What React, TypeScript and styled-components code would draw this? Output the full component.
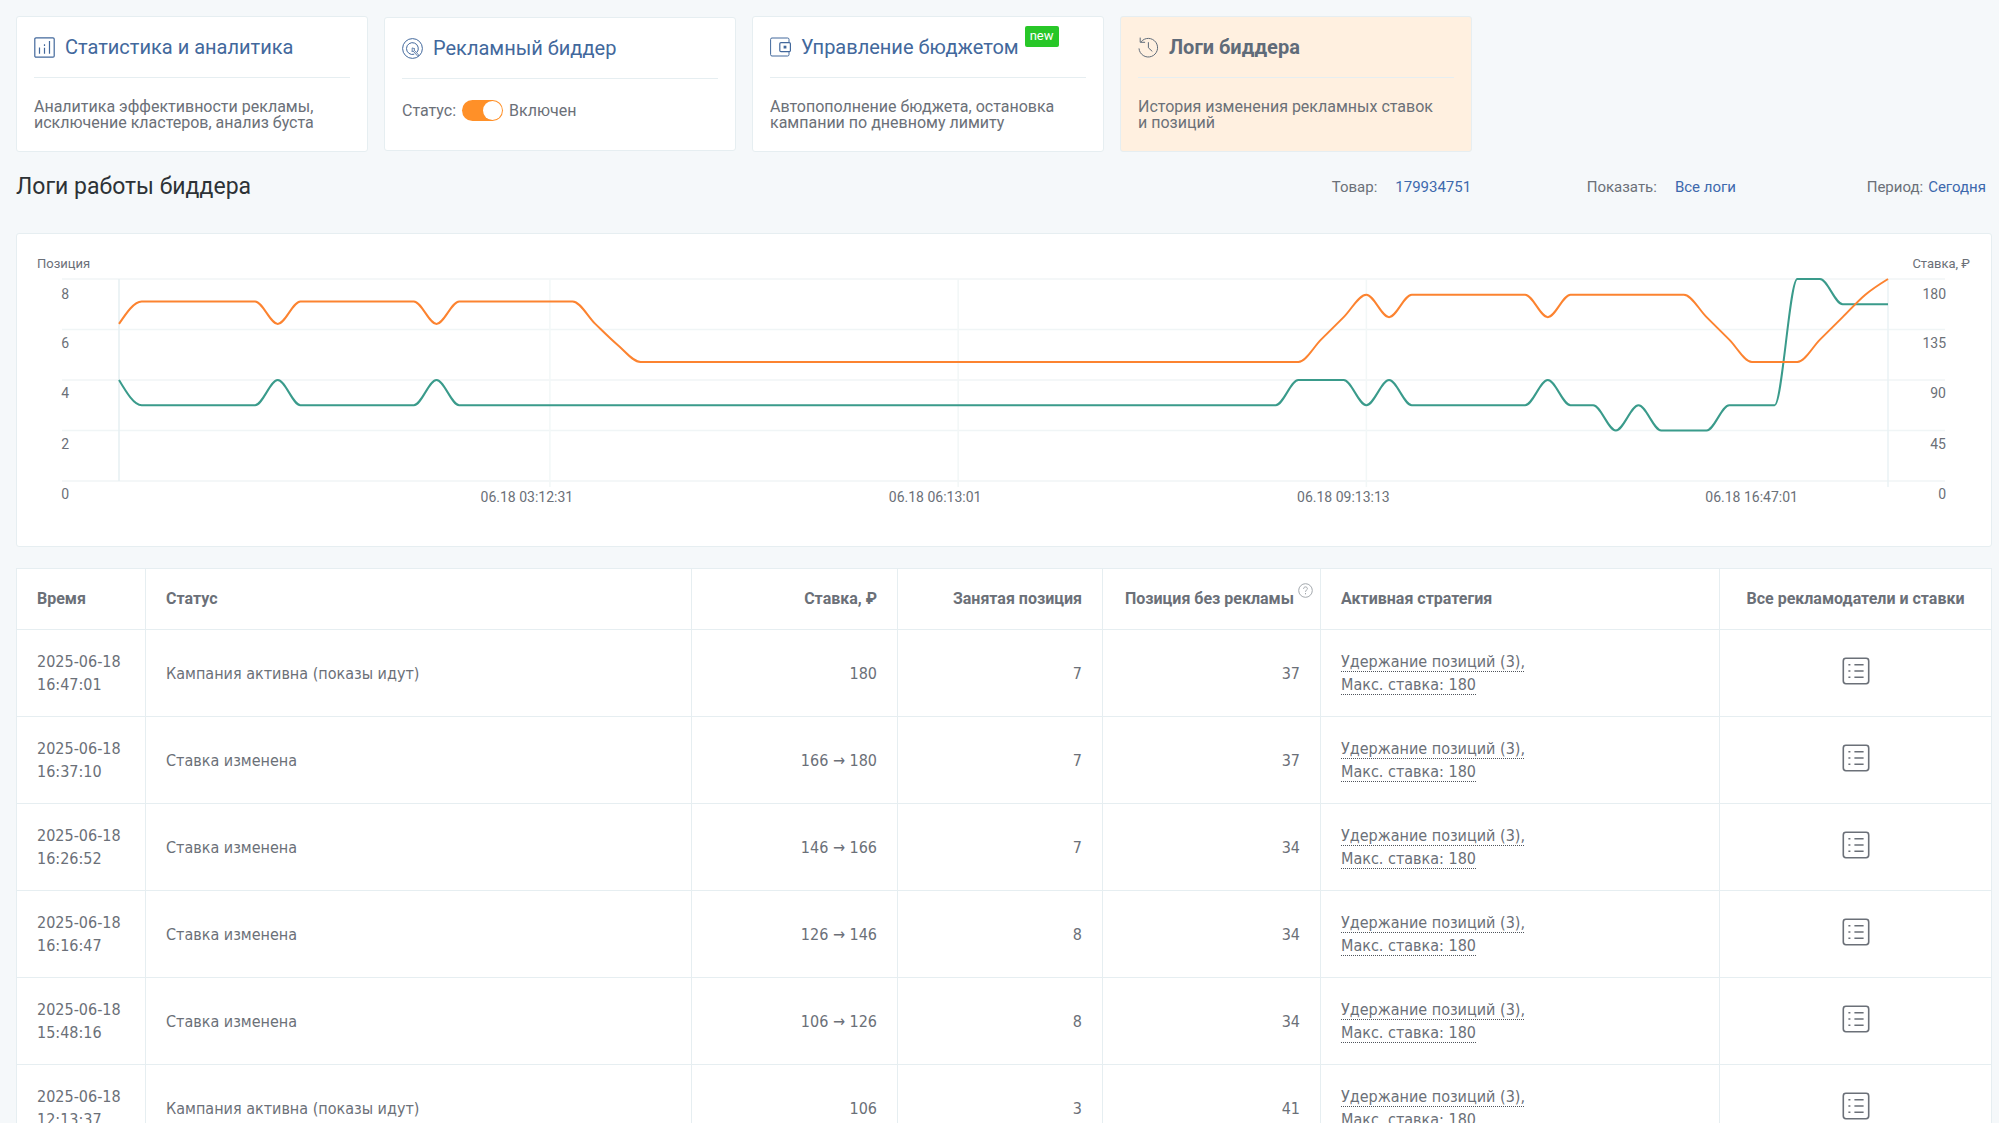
import React, { useLayoutEffect, useRef, useState } from "react";
import styled, { createGlobalStyle, css } from "styled-components";

const color = {
  page: "#f5f8fa",
  panel: "#ffffff",
  border: "#e6eef1",
  text: "#6b7078",
  heading: "#2d3236",
  link: "#3d69ad",
  title: "#42689c",
  active: "#fff0e0",
  activeTitle: "#5f6b79",
  orange: "#ff9028",
  bidLine: "#fc8330",
  green: "#3a9b8b",
  badge: "#28c728",
};

const GlobalStyle = createGlobalStyle`
  * { box-sizing: border-box; }
  body {
    margin: 0;
    background: ${color.page};
    color: ${color.text};
    font-family: Roboto, "Liberation Sans", sans-serif;
    font-size: 16px;
  }
  button {
    margin: 0;
    padding: 0;
    border: 0;
    background: none;
    color: inherit;
    font: inherit;
    cursor: pointer;
  }
`;

const Page = styled.main`
  padding: 16px 7px 0 16px;
`;

/* ---------- section cards ---------- */

const Cards = styled.nav`
  display: flex;
  align-items: center;
  gap: 16px;
`;

const Card = styled.section<{ $active?: boolean }>`
  flex: 0 1 352px;
  padding: 17px 17px 20px;
  border: 1px solid ${color.border};
  border-radius: 3px;
  background: ${(p) => (p.$active ? color.active : color.panel)};
`;

const CardHead = styled.div`
  display: flex;
  align-items: center;
  gap: 10px;
  padding-bottom: 17px;
  border-bottom: 1px solid ${color.border};
`;

const CardTitle = styled.a<{ $active?: boolean }>`
  display: flex;
  align-items: center;
  gap: 10px;
  color: ${color.title};
  font-size: 20px;
  line-height: 26px;
  text-decoration: none;
  white-space: nowrap;
  ${(p) =>
    p.$active &&
    css`
      color: ${color.activeTitle};
      font-weight: 700;
    `}
`;

const CardIcon = styled.svg`
  flex: none;
  width: 21px;
  height: 21px;
  fill: none;
  stroke: currentColor;
  stroke-width: 1;
`;

const Badge = styled.span`
  align-self: flex-start;
  height: 21px;
  margin: -8px 0 0 -4px;
  padding: 0 5px;
  border-radius: 2px;
  background: ${color.badge};
  color: #ffffff;
  font-size: 13px;
  line-height: 20px;
`;

const CardText = styled.p`
  margin: 21px 0 0;
  line-height: 16px;
`;

const StatusRow = styled.div`
  display: flex;
  align-items: flex-start;
  gap: 6px;
  min-height: 30px;
  margin-top: 21px;
  line-height: 21px;
`;

const Toggle = styled.input`
  appearance: none;
  display: flex;
  justify-content: flex-end;
  width: 41px;
  height: 21px;
  margin: 0;
  padding: 1px;
  border-radius: 11px;
  background: #c5cdd3;
  cursor: pointer;
  &::before {
    content: "";
    width: 19px;
    height: 19px;
    border-radius: 50%;
    background: #ffffff;
  }
  &:not(:checked) {
    justify-content: flex-start;
  }
  &:checked {
    background: ${color.orange};
  }
`;

/* ---------- heading and filters ---------- */

const Toolbar = styled.header`
  display: flex;
  justify-content: space-between;
  align-items: center;
  margin: 20px 0 31px;
`;

const Heading = styled.h1`
  margin: 0;
  color: ${color.heading};
  font-size: 23px;
  font-weight: 400;
  line-height: 30px;
`;

const Filters = styled.div`
  display: grid;
  grid-template-columns: 255px 280px auto;
  padding-right: 6px;
  font-size: 15px;
  line-height: 20px;
`;

const Filter = styled.div<{ $gap: number }>`
  display: flex;
  gap: ${(p) => p.$gap}px;
`;

const FilterValue = styled.button`
  color: ${color.link};
`;

/* ---------- chart ---------- */

const ChartPanel = styled.section`
  margin-bottom: 21px;
  border: 1px solid ${color.border};
  border-radius: 3px;
  background: ${color.panel};
`;

const ChartSvg = styled.svg`
  display: block;
  width: 100%;
  height: 312px;
  font-size: 14px;
  text {
    fill: ${color.text};
  }
`;

const AxisTitle = styled.text`
  font-size: 13px;
`;

const CHART = { left: 102, right: 103, top: 45, bottom: 247, steps: 78 };

type Run = [value: number, count: number];
const expand = (runs: Run[]) => runs.flatMap(([v, n]) => Array<number>(n).fill(v));

const positions = expand([
  [4, 1], [3, 6], [4, 1], [3, 6], [4, 1], [3, 37], [4, 3], [3, 1], [4, 1], [3, 6],
  [4, 1], [3, 2], [2, 1], [3, 1], [2, 3], [3, 3], [8, 2], [7, 3],
]);

const bids = expand([
  [140, 1], [160, 6], [140, 1], [160, 6], [140, 1], [160, 6], [140, 1], [121, 1],
  [106, 30], [126, 1], [146, 1], [166, 1], [146, 1], [166, 6], [146, 1], [166, 6],
  [146, 1], [126, 1], [106, 3], [126, 1], [146, 1], [166, 1], [180, 1],
]);

/* Monotone cubic path through evenly spaced values. */
function smoothPath(ys: number[], x0: number, dx: number) {
  const slope = ys.slice(1).map((y, i) => (y - ys[i]) / dx);
  const last = ys.length - 1;
  const t = ys.map((_, i) => {
    if (i === 0 || i === last) return 0;
    const a = slope[i - 1];
    const b = slope[i];
    if (a * b <= 0) return 0;
    return Math.sign(a) * Math.min(Math.abs(a), Math.abs(b), Math.abs(a + b) / 4) * 2;
  });
  t[0] = (3 * slope[0] - t[1]) / 2;
  t[last] = (3 * slope[last - 1] - t[last - 1]) / 2;
  let d = `M${x0},${ys[0]}`;
  for (let i = 0; i < last; i++) {
    const x = x0 + i * dx;
    const h = dx / 3;
    d += `C${x + h},${ys[i] + t[i] * h} ${x + 2 * h},${ys[i + 1] - t[i + 1] * h} ${x + dx},${ys[i + 1]}`;
  }
  return d;
}

function Chart() {
  const ref = useRef<SVGSVGElement>(null);
  const [width, setWidth] = useState(1200);

  useLayoutEffect(() => {
    const measure = () => {
      if (ref.current) setWidth(ref.current.getBoundingClientRect().width);
    };
    measure();
    window.addEventListener("resize", measure);
    return () => window.removeEventListener("resize", measure);
  }, []);

  const { left, right, top, bottom, steps } = CHART;
  const dx = (width - left - right) / steps;
  const y = (share: number) => bottom - share * (bottom - top);
  const ticks = [
    { share: 1, position: 8, bid: 180 },
    { share: 0.75, position: 6, bid: 135 },
    { share: 0.5, position: 4, bid: 90 },
    { share: 0.25, position: 2, bid: 45 },
    { share: 0, position: 0, bid: 0 },
  ];
  const times = [
    { step: 19, label: "06.18 03:12:31" },
    { step: 37, label: "06.18 06:13:01" },
    { step: 55, label: "06.18 09:13:13" },
    { step: 73, label: "06.18 16:47:01" },
  ];

  return (
    <ChartSvg ref={ref} role="img" aria-label="Позиция и ставка">
      <AxisTitle x={20} y={34}>Позиция</AxisTitle>
      <AxisTitle x={width - 21} y={34} textAnchor="end">Ставка, ₽</AxisTitle>

      {ticks.map((tick) => (
        <line key={tick.position} x1={45} x2={width - 46} y1={y(tick.share)} y2={y(tick.share)} stroke="#f0f5f6" strokeWidth={1.5} />
      ))}
      {[19, 37, 55, 78].map((step) => (
        <line key={step} x1={left + step * dx} x2={left + step * dx} y1={top} y2={bottom + 6} stroke={step === 78 ? "#eaf2f4" : "#f2f7f7"} strokeWidth={1.5} />
      ))}
      <line x1={left} x2={left} y1={top} y2={bottom} stroke="#e6eff2" strokeWidth={1.5} />

      {ticks.map((tick) => {
        const baseline = y(tick.share) + (tick.share === 1 ? 20 : 18);
        return (
          <g key={tick.position} textAnchor="end">
            <text x={52} y={baseline}>{tick.position}</text>
            <text x={width - 45} y={baseline}>{tick.bid}</text>
          </g>
        );
      })}
      {times.map((time) => (
        <text key={time.step} x={left + time.step * dx - 23} y={268} textAnchor="middle">{time.label}</text>
      ))}

      <g fill="none" strokeWidth={2}>
        <path d={smoothPath(positions.map((v) => y(v / 8)), left, dx)} stroke={color.green} />
        <path d={smoothPath(bids.map((v) => y(v / 180)), left, dx)} stroke={color.bidLine} />
      </g>
    </ChartSvg>
  );
}

/* ---------- log table ---------- */

const Table = styled.table`
  width: 100%;
  table-layout: fixed;
  border-collapse: collapse;
  background: ${color.panel};
`;

const Col = styled.col<{ $width?: number }>`
  width: ${(p) => (p.$width ? `${p.$width}px` : "auto")};
`;

type Align = "left" | "right" | "center";

const HeadCell = styled.th<{ $align?: Align }>`
  height: 61px;
  padding: 0 20px;
  border: 1px solid ${color.border};
  font-weight: 700;
  line-height: 20px;
  text-align: ${(p) => p.$align ?? "left"};
  white-space: nowrap;
`;

const HeadWithHint = styled(HeadCell)`
  padding-right: 7px;
`;

const HintGroup = styled.span`
  display: flex;
  justify-content: flex-end;
  gap: 4px;
`;

const HintButton = styled.button`
  display: flex;
  align-self: flex-start;
  margin-top: -6px;
`;

const HintIcon = styled.svg`
  width: 15px;
  height: 15px;
  fill: none;
  stroke: #a3a8ad;
  stroke-width: 1;
`;

const Cell = styled.td<{ $align?: Align }>`
  height: 87px;
  padding: 0 20px;
  border: 1px solid ${color.border};
  font-family: "DejaVu Sans Condensed", "Noto Sans", sans-serif;
  line-height: 23px;
  text-align: ${(p) => p.$align ?? "left"};
`;

const ActionCell = styled(Cell)`
  padding-bottom: 5px;
`;

const Strategy = styled.button`
  display: block;
  text-align: left;
  text-decoration: underline dotted 1px #4f555c;
  text-decoration-skip-ink: none;
  text-underline-offset: 4px;
`;

const ListButton = styled.button`
  display: inline-flex;
  vertical-align: middle;
`;

const ListSvg = styled.svg`
  width: 28px;
  height: 28px;
  fill: none;
  stroke: ${color.text};
  stroke-width: 1.6;
`;

interface LogRow {
  date: string;
  time: string;
  status: string;
  bid: string;
  place: number;
  organic: number;
}

const ACTIVE = "Кампания активна (показы идут)";
const CHANGED = "Ставка изменена";

const logs: LogRow[] = [
  { date: "2025-06-18", time: "16:47:01", status: ACTIVE, bid: "180", place: 7, organic: 37 },
  { date: "2025-06-18", time: "16:37:10", status: CHANGED, bid: "166 → 180", place: 7, organic: 37 },
  { date: "2025-06-18", time: "16:26:52", status: CHANGED, bid: "146 → 166", place: 7, organic: 34 },
  { date: "2025-06-18", time: "16:16:47", status: CHANGED, bid: "126 → 146", place: 8, organic: 34 },
  { date: "2025-06-18", time: "15:48:16", status: CHANGED, bid: "106 → 126", place: 8, organic: 34 },
  { date: "2025-06-18", time: "12:13:37", status: ACTIVE, bid: "106", place: 3, organic: 41 },
];

function LogTable() {
  return (
    <Table>
      <colgroup>
        <Col $width={129} />
        <Col />
        <Col $width={206} />
        <Col $width={205} />
        <Col $width={218} />
        <Col $width={399} />
        <Col $width={272} />
      </colgroup>
      <thead>
        <tr>
          <HeadCell>Время</HeadCell>
          <HeadCell>Статус</HeadCell>
          <HeadCell $align="right">Ставка, ₽</HeadCell>
          <HeadCell $align="right">Занятая позиция</HeadCell>
          <HeadWithHint>
            <HintGroup>
              Позиция без рекламы
              <HintButton type="button" aria-label="Подсказка">
                <HintIcon viewBox="0 0 15 15">
                  <circle cx="7.5" cy="7.5" r="6.8" />
                  <path d="M5.6 5.9c0-1.2.8-2 1.9-2s1.9.8 1.9 1.8c0 1.3-1.9 1.5-1.9 3.1M7.5 10v1.3" />
                </HintIcon>
              </HintButton>
            </HintGroup>
          </HeadWithHint>
          <HeadCell>Активная стратегия</HeadCell>
          <HeadCell $align="center">Все рекламодатели и ставки</HeadCell>
        </tr>
      </thead>
      <tbody>
        {logs.map((row) => (
          <tr key={row.time}>
            <Cell>
              {row.date} {row.time}
            </Cell>
            <Cell>{row.status}</Cell>
            <Cell $align="right">{row.bid}</Cell>
            <Cell $align="right">{row.place}</Cell>
            <Cell $align="right">{row.organic}</Cell>
            <Cell>
              <Strategy type="button">
                Удержание позиций (3),
                <br />
                Макс. ставка: 180
              </Strategy>
            </Cell>
            <ActionCell $align="center">
              <ListButton type="button" aria-label="Все рекламодатели и ставки">
                <ListSvg viewBox="0 0 28 28">
                  <rect x="1.3" y="1.3" width="25.4" height="25.4" rx="2.6" />
                  <path d="M12.4 7.7h9.2M12.4 14h9.2M12.4 20.3h9.2M6.4 7.7h2M6.4 14h2M6.4 20.3h2" />
                </ListSvg>
              </ListButton>
            </ActionCell>
          </tr>
        ))}
      </tbody>
    </Table>
  );
}

export default function App() {
  const [enabled, setEnabled] = useState(true);

  return (
    <>
      <GlobalStyle />
      <Page>
        <Cards>
          <Card>
            <CardHead>
              <CardTitle href="#stats">
                <CardIcon viewBox="0 0 21 21">
                  <rect x=".8" y=".8" width="19.4" height="19.4" rx="1.2" strokeWidth="1.2" />
                  <path d="M5.5 10.5v6.3M10.5 7.2v1.8M10.5 10.8v6M15.5 4v12.8" strokeWidth="1.2" />
                </CardIcon>
                Статистика и аналитика
              </CardTitle>
            </CardHead>
            <CardText>Аналитика эффективности рекламы, исключение кластеров, анализ буста</CardText>
          </Card>

          <Card>
            <CardHead>
              <CardTitle href="#bidder">
                <CardIcon viewBox="0 0 21 21">
                  <circle cx="10.5" cy="10.5" r="9.9" />
                  <path d="M14.9 14.4A5.9 5.9 0 1 0 12.2 16.2" />
                  <path d="M10.2 9.9l2.8 1-1.1.9 4.9 5.4-1 1-4.9-5.4-.8 1z" strokeWidth=".8" />
                </CardIcon>
                Рекламный биддер
              </CardTitle>
            </CardHead>
            <StatusRow>
              <label htmlFor="bidder-status">Статус:</label>
              <Toggle
                id="bidder-status"
                type="checkbox"
                checked={enabled}
                onChange={(e) => setEnabled(e.target.checked)}
              />
              <span>{enabled ? "Включен" : "Выключен"}</span>
            </StatusRow>
          </Card>

          <Card>
            <CardHead>
              <CardTitle href="#budget">
                <CardIcon viewBox="0 0 21 21">
                  <path d="M19 5.2V2.4a1.4 1.4 0 0 0-1.4-1.4H2A1.4 1.4 0 0 0 .6 2.4v15.2A1.4 1.4 0 0 0 2 19h15.6a1.4 1.4 0 0 0 1.4-1.4v-2.8" />
                  <rect x="9.8" y="5.6" width="10.6" height="9" rx="1.2" strokeWidth="1.2" />
                  <rect x="13.6" y="8.7" width="2.8" height="2.8" fill="currentColor" stroke="none" />
                </CardIcon>
                Управление бюджетом
              </CardTitle>
              <Badge>new</Badge>
            </CardHead>
            <CardText>Автопополнение бюджета, остановка кампании по дневному лимиту</CardText>
          </Card>

          <Card $active>
            <CardHead>
              <CardTitle href="#logs" aria-current="page" $active>
                <CardIcon viewBox="0 0 21 21">
                  <path d="M3 4.9A9.3 9.3 0 1 1 1 11.4" />
                  <path d="M2.2.6v4.7h4.9M10.4 5.2v5.6l3.9 3.6" />
                </CardIcon>
                Логи биддера
              </CardTitle>
            </CardHead>
            <CardText>История изменения рекламных ставок и&nbsp;позиций</CardText>
          </Card>
        </Cards>

        <Toolbar>
          <Heading>Логи работы биддера</Heading>
          <Filters>
            <Filter $gap={18}>
              <span>Товар:</span>
              <FilterValue type="button">179934751</FilterValue>
            </Filter>
            <Filter $gap={18}>
              <span>Показать:</span>
              <FilterValue type="button">Все логи</FilterValue>
            </Filter>
            <Filter $gap={5}>
              <span>Период:</span>
              <FilterValue type="button">Сегодня</FilterValue>
            </Filter>
          </Filters>
        </Toolbar>

        <ChartPanel>
          <Chart />
        </ChartPanel>

        <LogTable />
      </Page>
    </>
  );
}
